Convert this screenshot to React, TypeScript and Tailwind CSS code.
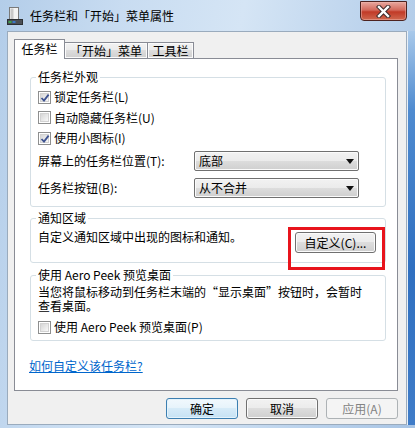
import React from 'react';

const btnFace =
  'bg-[linear-gradient(#f2f2f2,#ebebeb_50%,#dddddd_50%,#cfcfcf)] shadow-[inset_0_0_0_1px_#fbfbfb]';

const CheckBox = ({ checked = false }: { checked?: boolean }) => (
  <span className="relative w-[13px] h-[13px] shrink-0 border border-[#8e8f8f] bg-white p-[1px]">
    <span className="block w-full h-full border border-[#d2d2d2] bg-[linear-gradient(135deg,#d6d6d6,#f8f8f8)]" />
    {checked && (
      <svg className="absolute left-[1px] top-[1px]" width="10" height="10" viewBox="0 0 10 10">
        <path d="M1.5 5 L4 7.6 L8.6 1.6" fill="none" stroke="#3d5290" strokeWidth="1.8" />
      </svg>
    )}
  </span>
);

const CheckRow = ({ checked, label, h }: { checked?: boolean; label: string; h: string }) => (
  <div className={`flex items-center gap-[3px] ${h}`}>
    <CheckBox checked={checked} />
    <span>{label}</span>
  </div>
);

const Combo = ({ value }: { value: string }) => (
  <div
    className={`w-[165px] h-[20px] rounded-[2px] border border-[#707070] flex items-center pl-[4px] pr-[4px] ${btnFace}`}
  >
    <span className="flex-1">{value}</span>
    <svg width="8" height="5" viewBox="0 0 8 5">
      <path d="M0 0 H8 L4 5 Z" fill="#111" />
    </svg>
  </div>
);

const Group = ({
  title,
  children,
  className = '',
}: {
  title: string;
  children: React.ReactNode;
  className?: string;
}) => (
  <fieldset className={`relative w-[356px] border border-[#d5dfe5] rounded-[3px] ${className}`}>
    <legend className="ml-[5px] px-[2px] leading-[14px]">{title}</legend>
    {children}
  </fieldset>
);

const WinButton = ({
  children,
  variant = 'normal',
}: {
  children: React.ReactNode;
  variant?: 'normal' | 'default' | 'disabled';
}) => {
  const look =
    variant === 'default'
      ? 'border-[#3c7fb1] bg-[linear-gradient(#f1f8fd,#e6f3fb_50%,#d6ebf8_50%,#c6e2f4)] shadow-[inset_0_0_0_1px_#e4f3fc]'
      : variant === 'disabled'
        ? 'border-[#adb2b5] bg-[#f4f4f4] text-[#838383]'
        : `border-[#707070] ${btnFace}`;
  return (
    <div className={`w-[72px] h-[21px] rounded-[3px] border flex items-center justify-center ${look}`}>
      {children}
    </div>
  );
};

export default function App() {
  return (
    <div className="w-[415px] h-[428px] overflow-hidden flex flex-col text-[12px] leading-[14px] text-black [font-family:'Noto_Sans_CJK_SC',sans-serif] bg-[linear-gradient(100deg,#b3cde9_0%,#c8dcf1_25%,#d5e5f5_50%,#bdd4ed_75%,#a8c4e4_100%)]">
      {/* title bar */}
      <div className="h-[31px] flex items-center shrink-0">
        <svg className="ml-[7px]" width="16" height="18" viewBox="0 0 16 18">
          <rect x="2.5" y="0.5" width="9" height="13" fill="#f4f4f4" stroke="#7a7a7a" />
          <rect x="3.5" y="1.5" width="3" height="11" fill="#c9c9c9" />
          <rect x="0.5" y="12.5" width="15" height="5" fill="#4b4f55" stroke="#2c2f33" />
          <rect x="1.5" y="14" width="3" height="2" fill="#3fa34d" />
          <rect x="5.5" y="14" width="3" height="2" fill="#3b78c8" />
        </svg>
        <span className="ml-[7px] mt-[1px]">任务栏和「开始」菜单属性</span>
        <div className="ml-auto mr-[8px] self-start mt-[1px] w-[47px] h-[20px] rounded-b-[4px] border border-[#4d2320] bg-[linear-gradient(#e8a89f,#d3695b_45%,#c13a27_55%,#d0684f)] shadow-[inset_0_0_0_1px_#f0b6ae80] flex items-center justify-center">
          <svg width="15" height="13" viewBox="0 0 15 13">
            <path d="M3 2 L12 11 M12 2 L3 11" stroke="#3a2a2a" strokeWidth="4.4" strokeLinecap="square" />
            <path d="M3 2 L12 11 M12 2 L3 11" stroke="#ffffff" strokeWidth="2.4" strokeLinecap="square" />
          </svg>
        </div>
      </div>

      <div className="flex h-[394px] shrink-0">
        <div className="w-[7px]" />
        <div className="w-[400px] h-[394px] border border-[#9aabbd] bg-[#f0f0f0] pt-[7px] pl-[6px]">
          {/* tabs */}
          <div className="relative z-10 flex items-end h-[20px]">
            <div className="w-[51px] h-[20px] border border-b-0 border-[#898c95] bg-white flex items-center justify-center pb-[1px]">
              任务栏
            </div>
            <div
              className={`w-[83px] h-[17px] border border-l-0 border-[#898c95] flex items-center justify-center ${btnFace}`}
            >
              「开始」菜单
            </div>
            <div
              className={`w-[46px] h-[17px] border border-l-0 border-[#898c95] flex items-center justify-center ${btnFace}`}
            >
              工具栏
            </div>
          </div>

          {/* panel */}
          <div className="-mt-px w-[384px] h-[333px] border border-[#898c95] bg-white pl-[15px] pt-[11px]">
            <Group title="任务栏外观">
              <div className="pl-[7px] pt-[3px] pb-[8px]">
                <CheckRow checked label="锁定任务栏(L)" h="h-[20px]" />
                <CheckRow label="自动隐藏任务栏(U)" h="h-[21px]" />
                <CheckRow checked label="使用小图标(I)" h="h-[20px]" />
                <div className="mt-[3px] h-[20px] flex items-center">
                  <span className="w-[156px]">屏幕上的任务栏位置(T):</span>
                  <Combo value="底部" />
                </div>
                <div className="mt-[7px] h-[20px] flex items-center">
                  <span className="w-[156px]">任务栏按钮(B):</span>
                  <Combo value="从不合并" />
                </div>
              </div>
            </Group>

            <Group title="通知区域" className="mt-[4px]">
              <div className="h-[37px] flex justify-between pl-[7px] pr-[9px]">
                <span className="mt-[5px]">自定义通知区域中出现的图标和通知。</span>
                <div
                  className={`mt-[7px] w-[81px] h-[21px] rounded-[3px] border border-[#707070] flex items-center justify-center ${btnFace}`}
                >
                  自定义(C)...
                </div>
              </div>
              <div className="absolute left-[257px] top-[2px] w-[97px] h-[43px] border-[3px] border-[#e8141c]" />
            </Group>

            <Group title="使用 Aero Peek 预览桌面" className="mt-[5px]">
              <div className="pl-[7px] pt-[3px] pb-[3px]">
                <p className="leading-[14px]">
                  当您将鼠标移动到任务栏末端的“显示桌面”按钮时，会暂时
                  <br />
                  查看桌面。
                </p>
                <div className="mt-[4px]">
                  <CheckRow label="使用 Aero Peek 预览桌面(P)" h="h-[20px]" />
                </div>
              </div>
            </Group>

            <div className="mt-[18px] -ml-px">
              <a href="#" className="text-[#0066cc] underline">
                如何自定义该任务栏?
              </a>
            </div>
          </div>

          {/* dialog buttons */}
          <div className="mt-[7px] w-[384px] flex justify-end gap-[8px]">
            <WinButton variant="default">确定</WinButton>
            <WinButton>取消</WinButton>
            <WinButton variant="disabled">应用(A)</WinButton>
          </div>
        </div>
        <div className="flex-1 border-l border-[#e8f0f8] bg-[linear-gradient(#a9c9ea,#4f8bd0_20%,#2f6fc0_60%,#3f7cc8)]" />
      </div>
    </div>
  );
}
